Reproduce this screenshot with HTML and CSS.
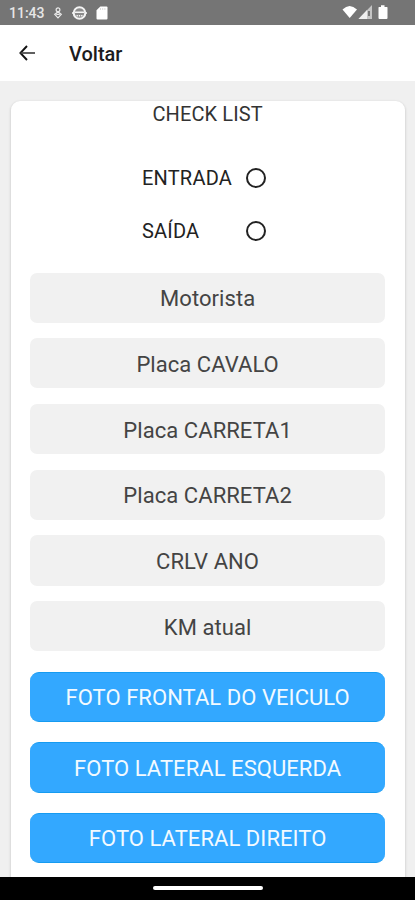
FILE: index.html
```html
<!DOCTYPE html>
<html lang="pt-BR">
<head>
<meta charset="utf-8">
<title>Check List</title>
<link rel="stylesheet" href="styles.css">
</head>
<body>
<div class="status">
  <span class="clock">11:43</span>
  <svg class="debug" width="10" height="12" viewBox="0 0 10 12" fill="none" stroke="#e8e8e8" stroke-width="1.2"><circle cx="5" cy="2.8" r="1.9"/><path d="M5 4.7 8.3 7.3 5 10.8 1.7 7.3ZM3.2 7.3h3.6"/></svg>
  <svg class="face" width="15" height="14" viewBox="0 0 15 14"><circle cx="7.5" cy="7" r="5.8" fill="#8c8c8c" stroke="#f4f4f4" stroke-width="2"/><path d="M3 6.2h9M5.2 9v1.6M7.5 9v1.6M9.8 9v1.6M0 7h2M13 7h2" stroke="#f4f4f4" stroke-width="1.4"/></svg>
  <svg class="sd" width="12" height="14" viewBox="0 0 12 14"><path d="M4.3.5H10.5a1 1 0 0 1 1 1v11a1 1 0 0 1-1 1h-9a1 1 0 0 1-1-1V4.2Z" fill="#fff"/><path d="M4.5 2v2M6.7 2v2M8.9 2v2" stroke="#ccc" stroke-width=".7"/></svg>
  <svg class="signals" width="46" height="15" viewBox="0 0 46 15"><path d="M.5 4.5Q7.5-2.5 15 4.5L7.7 13Z" fill="#fff"/><path d="M30 0v14H16.5Z" fill="#c4c4c4"/><path d="M25 5v9h-8.5Z" fill="#eee"/><path d="M26 6h2v5h-2z" fill="#777"/><path d="M36.5 2H39V.3h3.5V2H45q.5 0 .5.7V13q0 1-1 1h-7q-1 0-1-1V2.7q0-.7.5-.7Z" fill="#fff"/></svg>
</div>
<header class="header">
  <svg width="18" height="16" viewBox="0 0 18 16" fill="none" stroke="#111" stroke-width="1.9"><path d="M9 1 2.4 8 9 15"/><path d="M2.5 8H17" stroke="#444" stroke-width="1.7"/></svg>
  <h1>Voltar</h1>
</header>
<main class="content">
  <section class="card">
    <h2>CHECK LIST</h2>
    <div class="options">
      <label><span>ENTRADA</span><i></i></label>
      <label><span>SAÍDA</span><i></i></label>
    </div>
    <div class="fields">
      <div class="field"><span>Motorista</span></div>
      <div class="field"><span>Placa CAVALO</span></div>
      <div class="field"><span>Placa CARRETA1</span></div>
      <div class="field"><span>Placa CARRETA2</span></div>
      <div class="field"><span>CRLV ANO</span></div>
      <div class="field"><span>KM atual</span></div>
    </div>
    <div class="buttons">
      <div class="button"><span>FOTO FRONTAL DO VEICULO</span></div>
      <div class="button"><span>FOTO LATERAL ESQUERDA</span></div>
      <div class="button"><span>FOTO LATERAL DIREITO</span></div>
    </div>
  </section>
</main>
<footer class="nav"><div class="pill"></div></footer>
</body>
</html>
```
FILE: styles.css
```css
* { box-sizing: border-box; }
body {
  margin: 0;
  width: 415px;
  height: 900px;
  overflow: hidden;
  display: flex;
  flex-direction: column;
  font-family: Roboto, sans-serif;
  background: #f0f0f0;
}
.status {
  height: 24.5px;
  flex: none;
  background: #757575;
  display: flex;
  align-items: center;
  padding: 1px 27px 0 9px;
}
.clock { width: 43.5px; font-size: 14px; font-weight: 500; color: #e6e6e6; }
.face { margin-left: 9px; }
.sd { margin-left: 9px; }
.signals { margin-left: auto; }
.header {
  height: 56.5px;
  flex: none;
  background: #fff;
  display: flex;
  align-items: center;
  padding-left: 18px;
}
.header h1 {
  margin: 2px 0 0 33px;
  font-size: 20px;
  font-weight: 500;
  color: #1c1c1e;
}
.content {
  flex: 1;
  min-height: 0;
  overflow: hidden;
  padding: 20px 10px 0 11px;
}
.card {
  height: 820px;
  padding: 0 20px 0 19.2px;
  border-radius: 9px;
  background: #fff;
  box-shadow: 0 1px 3px rgba(0, 0, 0, .22);
}
.card h2 {
  margin: 0;
  height: 51px;
  padding-top: 1px;
  text-align: center;
  font-size: 20px;
  line-height: 24px;
  font-weight: 400;
  letter-spacing: .1px;
  color: #333;
}
.options { height: 120.5px; padding-left: 111.8px; }
.options label {
  height: 52.5px;
  display: flex;
  align-items: center;
  font-size: 20px;
  letter-spacing: .2px;
  color: #222;
}
.options span { width: 104px; }
.options i {
  width: 20px;
  height: 20px;
  border: 2px solid #222;
  border-radius: 50%;
}
.fields { display: flex; flex-direction: column; gap: 15.4px; }
.field, .button {
  height: 50.3px;
  display: flex;
  align-items: center;
  justify-content: center;
  font-size: 22px;
  letter-spacing: .06px;
  padding-top: 2px;
  white-space: nowrap;
}
.field { border-radius: 7px; background: #f1f1f1; color: #444; }
.buttons { margin-top: 20.4px; display: flex; flex-direction: column; gap: 20.3px; }
.button {
  border-radius: 9px;
  background: #33a8ff;
  color: #f2faff;
  border: solid #169bf0;
  border-width: 1px 0;
}
.nav {
  height: 23.5px;
  flex: none;
  background: #000;
  display: flex;
  justify-content: center;
  padding-top: 9.5px;
}
.pill { width: 110px; height: 4px; border-radius: 2px; background: #fff; }
```
